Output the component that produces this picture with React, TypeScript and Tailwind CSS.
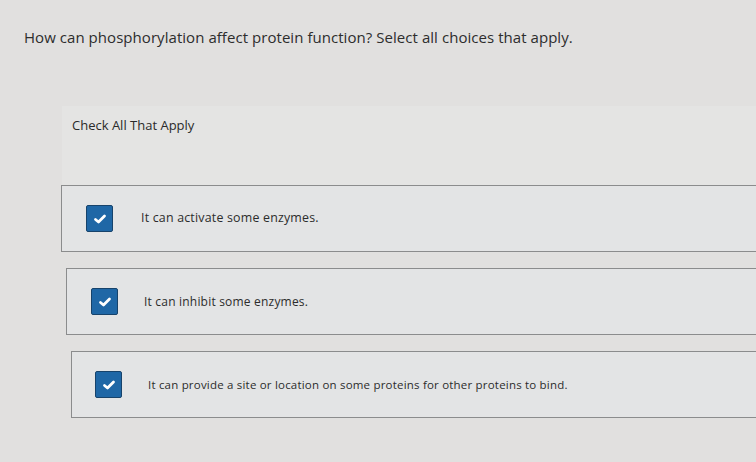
import React from "react";

const Check = () => (
  <div className="w-[27px] h-[27px] rounded-[2px] bg-[#1f67a6] border border-[#17436b] flex items-center justify-center shrink-0">
    <svg width="14" height="12" viewBox="0 0 14 12">
      <path d="M2.5 6.5 L5.5 9 L11.5 3" fill="none" stroke="#fff" strokeWidth="2.8" strokeLinecap="round" strokeLinejoin="round" />
    </svg>
  </div>
);

const Option = ({ text, ml, cbx, tx }: { text: string; ml: string; cbx: string; tx: string }) => (
  <div className={`${ml} h-[67px] bg-[#e3e4e5] border border-r-0 border-[#8b8c8d] flex items-center`}>
    <div className={cbx}>
      <Check />
    </div>
    <div className={`${tx} text-[#2c2c2c] tracking-[0.2px]`}>{text}</div>
  </div>
);

export default function App() {
  return (
    <div className="w-[756px] h-[462px] overflow-hidden bg-[#e1e0df] font-['Open_Sans',sans-serif]">
      <div className="pl-[24px] pt-[27px] text-[15px] text-[#2d2d2d] tracking-[0.05px] leading-[20px]">
        How can phosphorylation affect protein function? Select all choices that apply.
      </div>
      <div className="mt-[59px] ml-[62px] bg-[#e4e4e3] pt-[10px] pb-[70px]">
        <div className="pl-[10px] text-[13px] text-[#2a2a2a] leading-[18px]">Check All That Apply</div>
      </div>
      <div className="-mt-[19px] flex flex-col">
        <Option ml="ml-[61px]" cbx="ml-[24px]" tx="ml-[28px] text-[12.4px]" text="It can activate some enzymes." />
        <Option ml="ml-[66px] mt-[16px]" cbx="ml-[24px]" tx="ml-[26px] text-[12px]" text="It can inhibit some enzymes." />
        <Option ml="ml-[71px] mt-[16px]" cbx="ml-[23px]" tx="ml-[26px] text-[11.5px]" text="It can provide a site or location on some proteins for other proteins to bind." />
      </div>
    </div>
  );
}
